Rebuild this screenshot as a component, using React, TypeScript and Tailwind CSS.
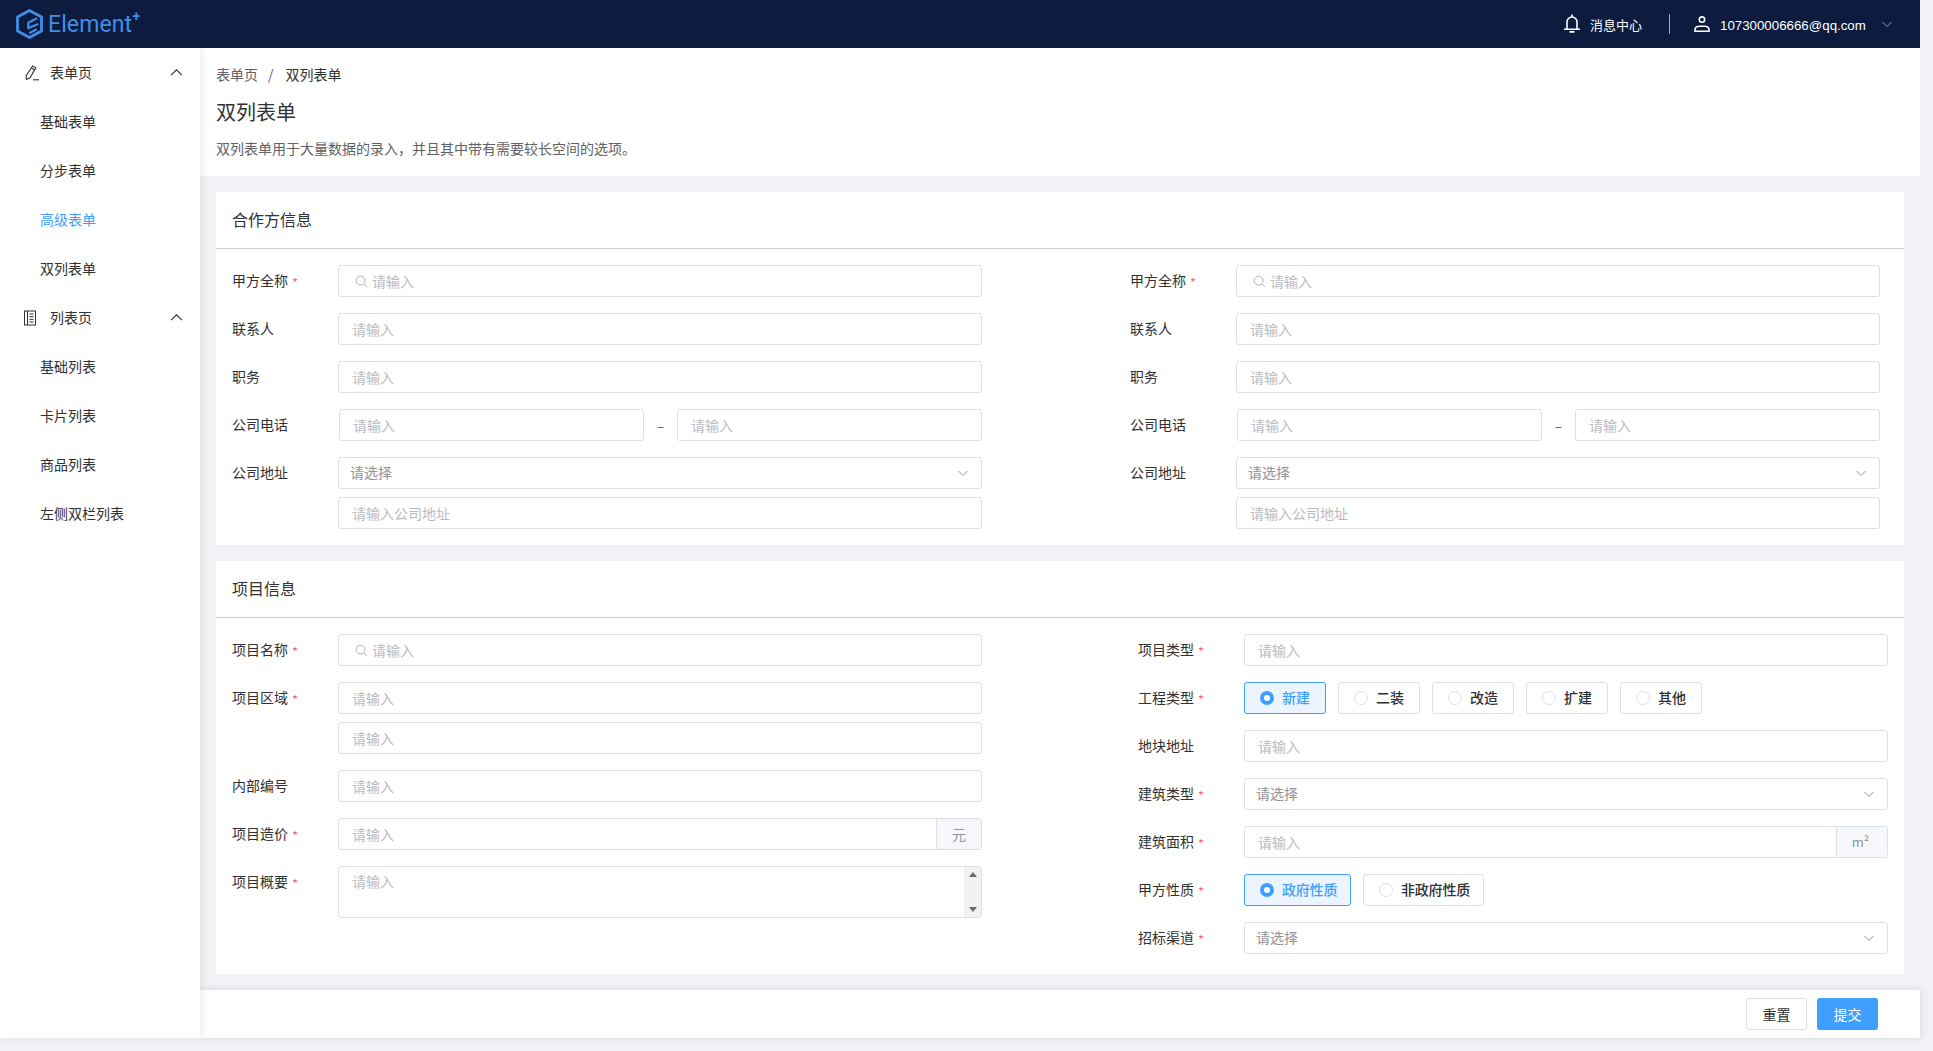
import React from "react";

const FONT = "font-['PingFang_SC','Noto_Sans_CJK_SC','Noto_Sans',sans-serif]";

function Chevron({ className, up }: { className?: string; up?: boolean }) {
  return (
    <svg viewBox="0 0 12 12" className={className} fill="none" stroke="currentColor" strokeWidth="1">
      {up ? <path d="M1 8.5 6 3.5l5 5" /> : <path d="M1.5 4 6 8.5 10.5 4" />}
    </svg>
  );
}

function Logo() {
  return (
    <div className="flex items-center ml-4 gap-[5px]">
      <svg viewBox="0 0 27 30" className="w-[27px] h-[30px]" fill="none" stroke="#3f8fe8">
        <path d="M13.5 1.6 25.5 8v14l-12 6.4L1.5 22V8z" strokeWidth="2.8" strokeLinejoin="round" />
        <path d="M21 9.3 12.3 13.7v5.6L22.3 15M13.3 24.3 20.7 20.3" strokeWidth="2.2" strokeLinejoin="round" />
      </svg>
      <div className="relative pt-[2px]">
        <span className="font-['Roboto',sans-serif] text-[23px] leading-none text-[#3f8fe8] tracking-[0.1px]">Element</span>
        <span className="absolute -right-[8px] -top-[2px] font-['Roboto',sans-serif] font-bold text-[14px] leading-none text-[#3f8fe8]">+</span>
      </div>
    </div>
  );
}

function Header() {
  return (
    <div className="h-12 shrink-0 bg-[#0d1b3e] flex items-center justify-between pr-[27px] text-white relative z-20">
      <Logo />
      <div className="flex items-center">
        <svg viewBox="0 0 16 20" className="w-4 h-5 mr-[10px]" fill="none" stroke="#fff" strokeWidth="1.6">
          <path d="M8 1v1.6" strokeLinecap="round" />
          <path d="M3 15V8a5 5 0 0 1 10 0v7" />
          <path d="M.5 15.2h15" strokeLinecap="round" />
          <path d="M6.2 17.8h3.6" strokeWidth="1.8" strokeLinecap="round" />
        </svg>
        <span className="text-[13px] leading-5 w-[52px] pt-[1px]">消息中心</span>
        <span className="w-px h-5 bg-[#a8afbf] ml-[27px] mr-[24px]" />
        <svg viewBox="0 0 16 16" className="w-4 h-4 mr-[10px]" fill="none" stroke="#fff" strokeWidth="1.6">
          <circle cx="8" cy="3.6" r="2.7" />
          <path d="M1 15.2v-1.7c0-2.2 2.4-3.3 4.4-3.3h5.2c2 0 4.4 1.1 4.4 3.3v1.7z" />
        </svg>
        <span className="font-['Liberation_Sans',sans-serif] text-[13.3px] leading-5 w-[146px] whitespace-nowrap pt-[4px]">107300006666@qq.com</span>
        <Chevron className="w-3 h-3 ml-[15px] text-[#8f97aa]" />
      </div>
    </div>
  );
}

function EditIcon() {
  return (
    <svg viewBox="0 0 16 16" className="w-4 h-4 text-[#303133]" fill="none" stroke="currentColor" strokeWidth="1.1">
      <path d="M8.6 1 11.8 2.9 6 12.8l-3.6 1.6-.2-3.8z" />
      <path d="M7.5 3l3.2 1.9" />
      <path d="M9 14.8h6" />
    </svg>
  );
}

function ListIcon() {
  return (
    <svg viewBox="0 0 16 16" className="w-4 h-4 text-[#303133]" fill="none" stroke="currentColor" strokeWidth="1">
      <rect x="0.5" y="1" width="11" height="14" />
      <path d="M3.5 1v14M5.5 4h4M5.5 6.7h4M5.5 9.4h4M5.5 12h4" />
    </svg>
  );
}

function MenuGroup({ icon, title, items, active }: { icon: React.ReactNode; title: string; items: string[]; active?: string }) {
  return (
    <div>
      <div className="h-[49px] flex items-center pl-[24px] pr-[17px] text-[14px] text-[#303133]">
        <span className="w-[26px]">{icon}</span>
        <span className="flex-1">{title}</span>
        <Chevron up className="w-[13px] h-[13px] text-[#303133]" />
      </div>
      {items.map((it) => (
        <div key={it} className={`h-[49px] flex items-center pl-10 text-[14px] ${it === active ? "text-[#409eff]" : "text-[#303133]"}`}>
          {it}
        </div>
      ))}
    </div>
  );
}

function Sidebar() {
  return (
    <div className="w-[200px] shrink-0 bg-white shadow-[2px_0_8px_rgba(0,0,0,0.08)] relative z-10 text-[14px]">
      <MenuGroup icon={<EditIcon />} title="表单页" items={["基础表单", "分步表单", "高级表单", "双列表单"]} active="高级表单" />
      <MenuGroup icon={<ListIcon />} title="列表页" items={["基础列表", "卡片列表", "商品列表", "左侧双栏列表"]} />
    </div>
  );
}

function Row({ label, required, children }: { label?: string; required?: boolean; children: React.ReactNode }) {
  return (
    <div className="flex">
      <div className="w-[106px] shrink-0 h-8 pb-[2px] flex items-center text-[14px] text-[#303133]">
        {label}
        {required && <span className="text-[#f56c6c] ml-[4px] text-[13px] leading-none mt-[5px]">*</span>}
      </div>
      <div className="flex-1 min-w-0">{children}</div>
    </div>
  );
}

function Input({ placeholder = "请输入", search, className = "" }: { placeholder?: string; search?: boolean; className?: string }) {
  return (
    <div className={`h-8 border border-[#dcdfe6] rounded-[3px] bg-white flex items-center text-[14px] text-[#b8bbc2] ${search ? "pl-4" : "pl-[13px]"} ${className}`}>
      {search && (
        <svg viewBox="0 0 14 14" className="w-[13px] h-[13px] mr-[4px] text-[#a8abb2]" fill="none" stroke="currentColor" strokeWidth="1">
          <circle cx="6" cy="6" r="4.8" />
          <path d="M9.6 9.6l3 3" />
        </svg>
      )}
      <span>{placeholder}</span>
    </div>
  );
}

function Select() {
  return (
    <div className="h-8 border border-[#dcdfe6] rounded-[3px] bg-white flex items-center justify-between pl-[11px] pr-3 text-[14px] text-[#909399]">
      <span className="-mt-[2px]">请选择</span>
      <Chevron className="w-3 h-3 text-[#909399]" />
    </div>
  );
}

function Phone() {
  return (
    <div className="flex items-center pl-px">
      <Input className="flex-1" />
      <span className="w-[33px] text-center text-[14px] text-[#606266]">–</span>
      <Input className="flex-1" />
    </div>
  );
}

function AddonInput({ unit, unitClass = "" }: { unit: string; unitClass?: string }) {
  return (
    <div className="h-8 border border-[#dcdfe6] rounded-[3px] bg-white flex items-center text-[14px] text-[#b8bbc2] overflow-hidden">
      <span className="flex-1 pl-[13px]">请输入</span>
      <span className={`h-full flex items-center justify-center bg-[#f5f7fa] border-l border-[#dcdfe6] text-[#909399] ${unitClass}`}>{unit}</span>
    </div>
  );
}

function Radio({ label, checked, className = "" }: { label: string; checked?: boolean; className?: string }) {
  return (
    <div className={`h-8 flex items-center px-[15px] gap-2 rounded-[3px] border text-[14px] font-medium ${checked ? "border-[#409eff] bg-[#ecf5ff] text-[#409eff]" : "border-[#dcdfe6] bg-white text-[#303133]"} ${className}`}>
      <span className={`w-[14px] h-[14px] rounded-full bg-white shrink-0 ${checked ? "border-[4px] border-[#409eff]" : "border border-[#dcdfe6]"}`} />
      <span className="-mt-[2px] whitespace-nowrap">{label}</span>
    </div>
  );
}

function Card({ title, children, className = "" }: { title: string; children: React.ReactNode; className?: string }) {
  return (
    <div className="bg-white">
      <div className="h-[57px] pb-[2px] border-b border-[#c9ccd2] flex items-center px-4 text-[16px] text-[#303133]">{title}</div>
      <div className={`pt-4 pb-4 pl-4 flex justify-between ${className}`}>{children}</div>
    </div>
  );
}

function PartyColumn() {
  return (
    <div className="flex flex-col gap-4 w-[750px]">
      <Row label="甲方全称" required><Input search /></Row>
      <Row label="联系人"><Input /></Row>
      <Row label="职务"><Input /></Row>
      <Row label="公司电话"><Phone /></Row>
      <Row label="公司地址">
        <div className="flex flex-col gap-2">
          <Select />
          <Input placeholder="请输入公司地址" />
        </div>
      </Row>
    </div>
  );
}

export default function App() {
  return (
    <div className={`h-[1051px] bg-[#f0f2f5] overflow-hidden ${FONT}`}>
      <div className="w-[1920px] h-[1038px] flex flex-col">
        <Header />
        <div className="flex flex-1 min-h-0">
          <Sidebar />
          <div className="flex-1 min-w-0 flex flex-col">
            <div className="h-32 shrink-0 bg-white px-4 pt-4">
              <div className="h-5 flex items-center text-[14px] leading-5">
                <span className="text-[#606266]">表单页</span>
                <span className="text-[#606266] ml-[10px] mr-[12px]">/</span>
                <span className="text-[#303133]">双列表单</span>
              </div>
              <div className="mt-[14px] text-[20px] leading-7 text-[#303133]">双列表单</div>
              <div className="mt-[12px] text-[14px] leading-5 text-[#606266]">双列表单用于大量数据的录入，并且其中带有需要较长空间的选项。</div>
            </div>
            <div className="flex-1 min-h-0 px-4 pt-4 flex flex-col gap-4">
              <Card title="合作方信息" className="pr-6">
                <PartyColumn />
                <PartyColumn />
              </Card>
              <Card title="项目信息" className="pr-4 h-[356px]">
                <div className="flex flex-col gap-4 w-[750px]">
                  <Row label="项目名称" required><Input search /></Row>
                  <Row label="项目区域" required>
                    <div className="flex flex-col gap-2">
                      <Input />
                      <Input />
                    </div>
                  </Row>
                  <Row label="内部编号"><Input /></Row>
                  <Row label="项目造价" required><AddonInput unit="元" unitClass="w-[45px]" /></Row>
                  <Row label="项目概要" required>
                    <div className="h-[52px] border border-[#dcdfe6] rounded-[3px] flex overflow-hidden bg-white">
                      <div className="flex-1 pl-[13px] pt-[4px] text-[14px] text-[#b8bbc2]">请输入</div>
                      <div className="w-[17px] bg-[#f1f1f1] flex flex-col items-center justify-between py-[5px]">
                        <span className="w-0 h-0 border-x-[4px] border-x-transparent border-b-[5px] border-b-[#6b6b6b]" />
                        <span className="w-0 h-0 border-x-[4px] border-x-transparent border-t-[5px] border-t-[#6b6b6b]" />
                      </div>
                    </div>
                  </Row>
                </div>
                <div className="flex flex-col gap-4 w-[750px]">
                  <Row label="项目类型" required><Input /></Row>
                  <Row label="工程类型" required>
                    <div className="flex gap-3">
                      <Radio label="新建" checked />
                      <Radio label="二装" />
                      <Radio label="改造" />
                      <Radio label="扩建" />
                      <Radio label="其他" />
                    </div>
                  </Row>
                  <Row label="地块地址"><Input /></Row>
                  <Row label="建筑类型" required><Select /></Row>
                  <Row label="建筑面积" required><AddonInput unit="m²" unitClass="w-[51px] text-[13px] pr-[3px]" /></Row>
                  <Row label="甲方性质" required>
                    <div className="flex gap-3">
                      <Radio label="政府性质" checked className="w-[107px] tracking-[-0.2px]" />
                      <Radio label="非政府性质" className="w-[121px] tracking-[-0.2px]" />
                    </div>
                  </Row>
                  <Row label="招标渠道" required><Select /></Row>
                </div>
              </Card>
            </div>
            <div className="h-12 shrink-0 bg-white shadow-[0_0_8px_rgba(0,0,0,0.12)] flex items-center justify-end gap-[10px] pr-[42px] relative">
              <button className="h-8 w-[61px] border border-[#dcdfe6] rounded-[3px] bg-white text-[14px] text-[#303133]">重置</button>
              <button className="h-8 w-[61px] rounded-[3px] bg-[#409eff] text-[14px] text-white">提交</button>
            </div>
          </div>
        </div>
      </div>
    </div>
  );
}
